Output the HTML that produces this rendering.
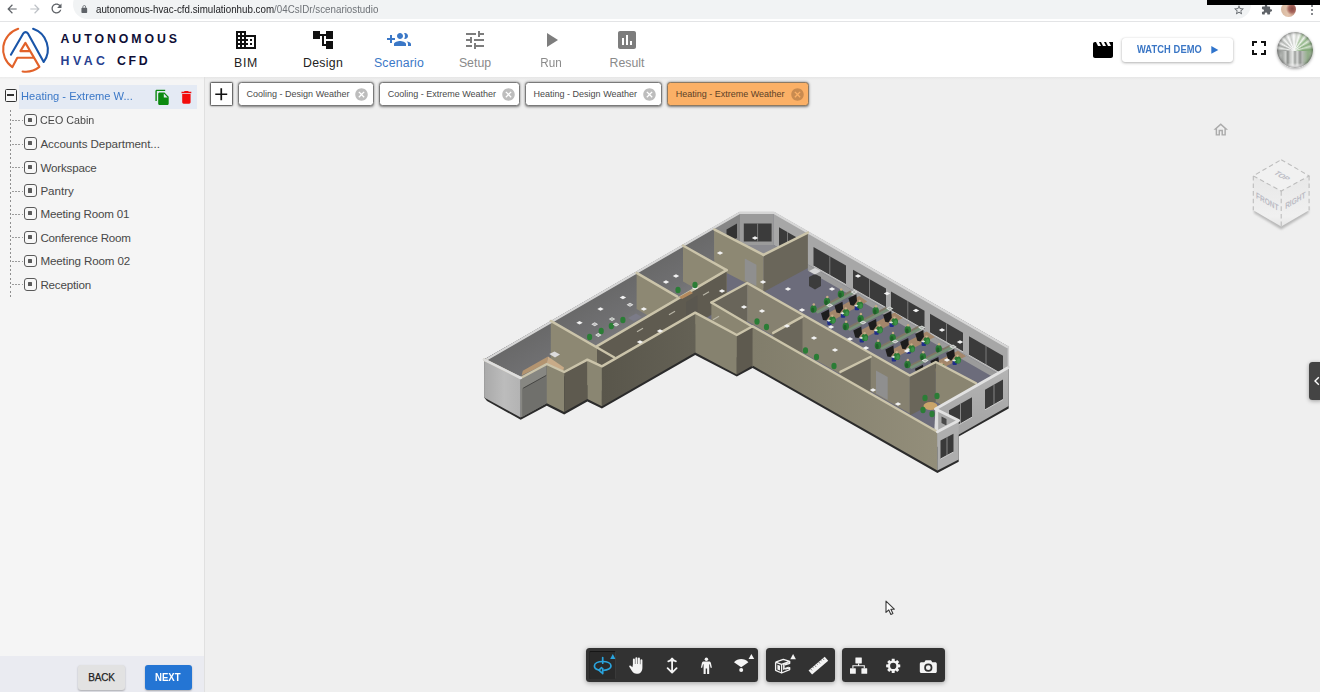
<!DOCTYPE html>
<html lang="en">
<head>
<meta charset="utf-8">
<title>Autonomous HVAC CFD - Scenario Studio</title>
<style>
*{box-sizing:border-box;margin:0;padding:0}
html,body{width:1320px;height:692px;overflow:hidden;background:#efefef;font-family:"Liberation Sans",sans-serif;color:#333}
.abs{position:absolute}
.t{position:absolute;white-space:nowrap;line-height:1}
#chrome{position:absolute;left:0;top:0;width:1320px;height:22px;background:#fff;border-bottom:1px solid #e3e4e6}
#urlpill{position:absolute;left:73px;top:-10px;width:1178px;height:29px;border-radius:14.5px;background:#f1f3f4}
#blackbar{position:absolute;left:1207px;top:0;width:113px;height:4.700px;background:#000;z-index:5}
#header{position:absolute;left:0;top:22px;width:1320px;height:55px;background:#fff}
#hshadow{position:absolute;left:0;top:77px;width:1320px;height:3px;background:linear-gradient(#e6e6e6,#efefef)}
#sidebar{position:absolute;left:0;top:77px;width:205px;height:615px;background:#f5f5f5;border-right:1px solid #e0e0e0}
#sbtop{position:absolute;left:0;top:77px;width:204px;height:3px;background:linear-gradient(#ebebeb,#f5f5f5)}
#sbbottom{position:absolute;left:0;top:655.500px;width:204px;height:36.500px;background:#eaebf1}
#rootrow{position:absolute;left:18.500px;top:84.700px;width:178.500px;height:24.600px;background:#e4eaf4}
#minus{position:absolute;left:4.700px;top:89.200px;width:12.700px;height:12.700px;border:1.600px solid #333;border-radius:1.500px;background:#f8f8f8}
#minus:after{content:"";position:absolute;left:1.700px;top:4px;width:6.200px;height:1.500px;background:#333}
#vdots{position:absolute;left:10px;top:110px;width:1px;height:188px;background:repeating-linear-gradient(180deg,#8f8f8f 0,#8f8f8f 2px,rgba(0,0,0,0) 2px,rgba(0,0,0,0) 4.300px)}
.hd{position:absolute;left:12px;width:11px;height:1px;background:repeating-linear-gradient(90deg,#9c9c9c 0,#9c9c9c 2px,rgba(0,0,0,0) 2px,rgba(0,0,0,0) 3.200px)}
.nd{position:absolute;left:24px;width:12.500px;height:12.500px;border:1.200px solid #5a5a5a;border-radius:3px;background:#f7f7f7}
.nd:after{content:"";position:absolute;left:3px;top:3px;width:4.200px;height:4.200px;background:#5a5a5a;border-radius:.5px}
.btn{position:absolute;top:665.300px;height:24.300px;border-radius:3px;box-shadow:0 1px 2px rgba(0,0,0,.28)}
.tab{position:absolute;top:82.200px;height:23.800px;border:1.600px solid #7a7a7a;border-radius:3.500px;background:#fff;box-shadow:0 .5px 2.500px rgba(0,0,0,.5)}
.tab.act{background:#fbb066;border-color:#8c7a64}
#plus{position:absolute;left:209.800px;top:82.400px;width:23.600px;height:23.500px;border:1.700px solid #6a6a6a;border-radius:1.500px;background:#fff;box-shadow:0 0 2px rgba(0,0,0,.55)}
.tbar{position:absolute;top:648px;height:34px;background:#323232;border-radius:3.500px;box-shadow:0 1px 5px rgba(0,0,0,.35)}
#demo{position:absolute;left:1122px;top:38px;width:111px;height:24px;border-radius:3px;background:#fff;box-shadow:0 1px 3px rgba(0,0,0,.3),0 0 1px rgba(0,0,0,.15)}
#avatar{position:absolute;left:1277px;top:32px;width:36px;height:36px;border-radius:50%;overflow:hidden;box-shadow:0 1px 3px rgba(0,0,0,.35);background:
 linear-gradient(180deg,rgba(255,255,255,0) 86%,rgba(255,255,255,.9) 96%),
 linear-gradient(90deg,rgba(150,152,150,0) 0,rgba(150,152,150,0) 10%,#a9aca9 16%,#cfd1cf 24%,#8a8d8a 30%,#c4c6c4 36%,#e6e8e6 44%,#9b9e9b 50%,#d9dbd9 56%,#8f928f 64%,#b9bcb9 70%,#a5b5a0 78%,#8fae86 86%,rgba(150,170,145,0) 94%) 0 100%/100% 46% no-repeat,
 radial-gradient(circle at 48% 50%,rgba(255,255,255,.9) 0,rgba(255,255,255,.35) 16%,rgba(255,255,255,0) 32%),
 conic-gradient(from -90deg at 48% 52%,#9a9d9a 0deg,#e8eae8 10deg,#a4a7a4 19deg,#f1f2f1 28deg,#b3b6b3 37deg,#f4f5f4 47deg,#c2c5c2 56deg,#fafafa 66deg,#c9ccc9 76deg,#ffffff 88deg,#d4d8d2 98deg,#f6f8f5 108deg,#a9c4a0 118deg,#eef3ec 127deg,#8fb585 137deg,#dfe9db 146deg,#86ad7c 156deg,#cfdfca 165deg,#7fa674 176deg,#9db894 190deg,#a0a39f 215deg,#b4b7b4 260deg,#a3a6a3 300deg,#b9bcb9 340deg,#9a9d9a 360deg)}
#avatar:after{content:"";position:absolute;inset:0;border-radius:50%;box-shadow:inset 0 0 2.5px 1px rgba(70,70,70,.6)}
#cavatar{position:absolute;left:1281px;top:2px;width:15px;height:15px;border-radius:50%;background:radial-gradient(circle at 75% 45%,#8a4a44 0,#a8665c 25%,rgba(0,0,0,0) 45%),linear-gradient(90deg,#d8b9a0,#e2c4ad 45%,#c79a86)}
#handle{position:absolute;left:1309px;top:361.500px;width:14px;height:38px;border-radius:3.500px;background:#444;box-shadow:0 1px 4px rgba(0,0,0,.35)}
</style>
</head>
<body>
<div id="chrome"><div id="urlpill"></div><div id="blackbar"></div>
<svg class="abs" style="left:4.8px;top:2px" width="14" height="14" viewBox="0 0 24 24" ><path fill="#5f6368" d="M20 11H7.830l5.590-5.590L12 4l-8 8 8 8 1.410-1.410L7.830 13H20v-2z"/></svg>
<svg class="abs" style="left:27.5px;top:2px" width="14" height="14" viewBox="0 0 24 24" ><path fill="#bdc1c6" d="M12 4l-1.410 1.410L16.170 11H4v2h12.170l-5.580 5.590L12 20l8-8z"/></svg>
<svg class="abs" style="left:48.8px;top:1.3px" width="15" height="15" viewBox="0 0 24 24" ><path fill="#5f6368" d="M17.650 6.350C16.200 4.900 14.210 4 12 4c-4.420 0-7.990 3.580-7.990 8s3.570 8 7.990 8c3.730 0 6.840-2.550 7.730-6h-2.080c-.82 2.330-3.040 4-5.650 4-3.310 0-6-2.690-6-6s2.690-6 6-6c1.660 0 3.140.69 4.220 1.780L13 11h7V4l-2.350 2.350z"/></svg>
<svg class="abs" style="left:80px;top:4.9px" width="8.6" height="8.6" viewBox="0 0 24 24" ><path fill="#5f6368" d="M18 8h-1V6c0-2.760-2.240-5-5-5S7 3.240 7 6v2H6c-1.100 0-2 .9-2 2v10c0 1.100.9 2 2 2h12c1.100 0 2-.9 2-2V10c0-1.100-.9-2-2-2zM9 6c0-1.660 1.340-3 3-3s3 1.340 3 3v2H9V6z"/></svg>
<svg class="abs" style="left:1233px;top:3.6px" width="12" height="12" viewBox="0 0 24 24" ><path fill="#5f6368" d="M22 9.240l-7.190-.62L12 2 9.190 8.630 2 9.240l5.460 4.730L5.820 21 12 17.270 18.180 21l-1.630-7.030L22 9.240zM12 15.400l-3.760 2.270 1-4.280-3.320-2.880 4.380-.38L12 6.100l1.710 4.040 4.380.38-3.320 2.880 1 4.280L12 15.400z"/></svg>
<svg class="abs" style="left:1261px;top:3.8px" width="11.5" height="11.5" viewBox="0 0 24 24" ><path fill="#5f6368" d="M20.500 11H19V7c0-1.100-.9-2-2-2h-4V3.500C13 2.120 11.880 1 10.500 1S8 2.120 8 3.500V5H4c-1.100 0-1.990.9-1.990 2v3.800H3.500c1.490 0 2.700 1.210 2.700 2.700s-1.210 2.700-2.700 2.700H2V20c0 1.100.9 2 2 2h3.800v-1.500c0-1.490 1.210-2.700 2.700-2.700 1.490 0 2.700 1.210 2.700 2.700V22H17c1.100 0 2-.9 2-2v-4h1.500c1.380 0 2.500-1.120 2.500-2.500S21.880 11 20.500 11z"/></svg>
<div id="cavatar"></div>
<div class="abs" style="left:1310.500px;top:4.500px;width:2px;height:2px;border-radius:50%;background:#5f6368;box-shadow:0 4px 0 #5f6368,0 8px 0 #5f6368"></div>
<div class="t" id="url" style="left:95.500px;top:3.5px;font-size:10.6px;color:#202124;transform:scaleX(.922);transform-origin:0 0">autonomous-hvac-cfd.simulationhub.com<span style="color:#6e7277">/04CsIDr/scenariostudio</span></div>
</div>
<div id="header"></div><div id="hshadow"></div>
<svg class="abs" style="left:0;top:22px" width="60" height="56" viewBox="0 22 60 56" fill="none" stroke-width="2.100" stroke-linecap="round" stroke-linejoin="round">
<path stroke="#e2622a" d="M18.200 28.800A21.700 21.700 0 0 0 12.300 67.200L17.300 57.700H33.400"/>
<path stroke="#e2622a" d="M20.400 51.100H29.100M20.400 51.100L25.400 42.900L39.400 66.900A21.700 21.700 0 0 1 22.600 71.500"/>
<path stroke="#1a55a8" d="M10.900 54.700L23.100 33.700Q25.600 30.600 28.100 33.700L43.700 62A21.700 21.700 0 0 0 33.100 28.800"/>
</svg>
<div class="t" id="lg1" style="left:60.500px;top:32.600px;font-weight:bold;font-size:12.300px;letter-spacing:2.950px;color:#0e0e36">AUTONOMOUS</div>
<div class="t" id="lg2" style="left:60.500px;top:54.900px;font-weight:bold;font-size:12.300px;letter-spacing:3.5px;color:#27408f">HVAC<span style="color:#0e0e36;letter-spacing:2.7px;margin-left:8.6px">CFD</span></div>
<svg class="abs" style="left:234px;top:28px" width="24" height="24" viewBox="0 0 24 24" ><path fill="#111" d="M12 7V3H2v18h20V7H12zM6 19H4v-2h2v2zm0-4H4v-2h2v2zm0-4H4V9h2v2zm0-4H4V5h2v2zm4 12H8v-2h2v2zm0-4H8v-2h2v2zm0-4H8V9h2v2zm0-4H8V5h2v2zm10 12h-8v-2h2v-2h-2v-2h2v-2h-2V9h8v10zm-2-8h-2v2h2v-2zm0 4h-2v2h2v-2z"/></svg>
<div class="t nav" id="nav0" style="left:206px;width:80px;text-align:center;top:56.800px;font-size:12.300px;color:#222;letter-spacing:.75px">BIM</div>
<svg class="abs" style="left:311px;top:28px" width="24" height="24" viewBox="0 0 24 24" ><path fill="#111" d="M22 11V3h-7v3H9V3H2v8h7V8h2v10h4v3h7v-8h-7v3h-2V8h2v3z"/></svg>
<div class="t nav" id="nav1" style="left:283px;width:80px;text-align:center;top:56.800px;font-size:12.300px;color:#222;letter-spacing:.3px">Design</div>
<svg class="abs" style="left:387px;top:28px" width="24" height="24" viewBox="0 0 24 24" ><path fill="#3b78c7" d="M8 10H5V7H3v3H0v2h3v3h2v-3h3v-2zm10 1c1.66 0 2.99-1.34 2.99-3S19.66 5 18 5c-.32 0-.63.05-.91.14.57.81.9 1.79.9 2.86s-.34 2.04-.9 2.86c.28.09.59.14.91.14zm-5 0c1.66 0 2.99-1.34 2.99-3S14.66 5 13 5c-1.66 0-3 1.34-3 3s1.34 3 3 3zm6.62 2.16c.83.73 1.38 1.66 1.38 2.84v2h3v-2c0-1.54-2.37-2.49-4.38-2.84zM13 13c-2 0-6 1-6 3v2h12v-2c0-2-4-3-6-3z"/></svg>
<div class="t nav" id="nav2" style="left:359px;width:80px;text-align:center;top:56.800px;font-size:12.300px;color:#3b78c7;letter-spacing:.2px">Scenario</div>
<svg class="abs" style="left:463px;top:28px" width="24" height="24" viewBox="0 0 24 24" ><path fill="#7d7d7d" d="M3 17v2h6v-2H3zM3 5v2h10V5H3zm10 16v-2h8v-2h-8v-2h-2v6h2zM7 9v2H3v2h4v2h2V9H7zm14 4v-2H11v2h10zm-6-4h2V7h4V5h-4V3h-2v6z"/></svg>
<div class="t nav" id="nav3" style="left:435px;width:80px;text-align:center;top:56.800px;font-size:12.300px;color:#8a8a8a">Setup</div>
<svg class="abs" style="left:539px;top:28px" width="24" height="24" viewBox="0 0 24 24" ><path fill="#7d7d7d" d="M8 5v14l11-7z"/></svg>
<div class="t nav" id="nav4" style="left:511px;width:80px;text-align:center;top:56.800px;font-size:12.300px;color:#8a8a8a;transform:scaleX(.95)">Run</div>
<svg class="abs" style="left:615px;top:28px" width="24" height="24" viewBox="0 0 24 24" ><path fill="#7d7d7d" d="M19 3H5c-1.1 0-2 .9-2 2v14c0 1.1.9 2 2 2h14c1.1 0 2-.9 2-2V5c0-1.1-.9-2-2-2zM9 17H7v-7h2v7zm4 0h-2V7h2v10zm4 0h-2v-4h2v4z"/></svg>
<div class="t nav" id="nav5" style="left:587px;width:80px;text-align:center;top:56.800px;font-size:12.300px;color:#8a8a8a">Result</div>
<svg class="abs" style="left:1091px;top:38px" width="24" height="24" viewBox="0 0 24 24" ><path fill="#000" d="M18 4l2 4h-3l-2-4h-2l2 4h-3l-2-4H8l2 4H7L5 4H4c-1.1 0-1.99.9-1.99 2L2 18c0 1.1.9 2 2 2h16c1.1 0 2-.9 2-2V4h-4z"/></svg>
<div id="demo"></div>
<div class="t" id="wd" style="left:1136.700px;top:45.200px;font-size:10.200px;font-weight:bold;letter-spacing:.1px;transform:scaleX(.915);transform-origin:0 0;color:#3a76c5">WATCH DEMO</div>
<svg class="abs" style="left:1211px;top:46px" width="8" height="8" viewBox="0 0 8 8"><path d="M.3 0L7.300 3.900L.3 7.800z" fill="#2f74cc"/></svg>
<svg class="abs" style="left:1246.5px;top:36px" width="24" height="24" viewBox="0 0 24 24" ><path fill="#111" d="M7 14H5v5h5v-2H7v-3zm-2-4h2V7h3V5H5v5zm12 7h-3v2h5v-5h-2v3zM14 5v2h3v3h2V5h-5z"/></svg>
<div id="avatar"></div>
<div id="sidebar"></div><div id="sbtop"></div><div id="sbbottom"></div><div id="rootrow"></div><div id="minus"></div><div id="vdots"></div>
<div class="t" id="root" style="left:20.600px;top:90.400px;font-size:11.600px;color:#3b78c7;transform:scaleX(.958);transform-origin:0 0">Heating - Extreme W...</div>
<svg class="abs" style="left:154.2px;top:88.5px" width="16.8" height="16.8" viewBox="0 0 24 24" ><path fill="#0c8a10" d="M16 1H4c-1.1 0-2 .9-2 2v14h2V3h12V1zm-1 4l6 6v10c0 1.1-.9 2-2 2H7.99C6.89 23 6 22.1 6 21l.01-14c0-1.1.89-2 1.99-2h7zm-1 7h5.5L14 6.500V12z"/></svg>
<svg class="abs" style="left:178px;top:88.7px" width="16.8" height="16.8" viewBox="0 0 24 24" ><path fill="#f20c0c" d="M6 19c0 1.1.9 2 2 2h8c1.1 0 2-.9 2-2V7H6v12zM19 4h-3.5l-1-1h-5l-1 1H5v2h14V4z"/></svg>
<div class="hd" style="top:120.0px"></div><div class="nd" style="top:113.7px"></div>
<div class="t ti" id="ti0" style="left:40.4px;top:114.2px;font-size:11.600px;color:#484848;transform:scaleX(.925);transform-origin:0 0">CEO Cabin</div>
<div class="hd" style="top:143.5px"></div><div class="nd" style="top:137.2px"></div>
<div class="t ti" id="ti1" style="left:40.4px;top:137.7px;font-size:11.600px;color:#484848;letter-spacing:-0.08px">Accounts Department...</div>
<div class="hd" style="top:167.3px"></div><div class="nd" style="top:161.0px"></div>
<div class="t ti" id="ti2" style="left:40.4px;top:161.5px;font-size:11.600px;color:#484848;letter-spacing:-0.18px">Workspace</div>
<div class="hd" style="top:190.7px"></div><div class="nd" style="top:184.4px"></div>
<div class="t ti" id="ti3" style="left:40.4px;top:184.9px;font-size:11.600px;color:#484848;letter-spacing:0px">Pantry</div>
<div class="hd" style="top:213.6px"></div><div class="nd" style="top:207.3px"></div>
<div class="t ti" id="ti4" style="left:40.4px;top:207.8px;font-size:11.600px;color:#484848;letter-spacing:-0.17px">Meeting Room 01</div>
<div class="hd" style="top:237.4px"></div><div class="nd" style="top:231.1px"></div>
<div class="t ti" id="ti5" style="left:40.4px;top:231.6px;font-size:11.600px;color:#484848;letter-spacing:-0.26px">Conference Room</div>
<div class="hd" style="top:260.9px"></div><div class="nd" style="top:254.6px"></div>
<div class="t ti" id="ti6" style="left:40.4px;top:255.1px;font-size:11.600px;color:#484848;letter-spacing:-0.12px">Meeting Room 02</div>
<div class="hd" style="top:284.4px"></div><div class="nd" style="top:278.1px"></div>
<div class="t ti" id="ti7" style="left:40.4px;top:278.6px;font-size:11.600px;color:#484848;letter-spacing:-0.17px">Reception</div>
<div class="btn" style="left:77.500px;width:47.500px;background:#e2e2e2"></div><div class="btn" style="left:144.500px;width:47.500px;background:#2475d4"></div>
<div class="t" id="bk" style="left:88.3px;top:672.700px;font-size:10px;letter-spacing:-.2px;-webkit-text-stroke:.250px #222;color:#222">BACK</div>
<div class="t" id="nx" style="left:154.900px;top:672.700px;font-size:10px;font-weight:bold;color:#fff;transform:scaleX(.955);transform-origin:0 0">NEXT</div>
<div id="plus"></div><svg class="abs" style="left:211.05px;top:83.75px" width="20.5" height="20.5" viewBox="0 0 24 24" ><path fill="#111" d="M19 13h-6v6h-2v-6H5v-2h6V5h2v6h6v2z"/></svg>
<div class="tab" style="left:238px;width:135.7px"></div>
<div class="t tb" id="tb0" style="left:246.6px;top:89.600px;font-size:9px;color:#4a4a4a">Cooling - Design Weather</div>
<svg class="abs" style="left:354.4px;top:86.8px" width="15" height="15" viewBox="0 0 24 24" ><path fill="#bdbdbd" d="M12 2C6.470 2 2 6.470 2 12s4.470 10 10 10 10-4.470 10-10S17.530 2 12 2zm5 13.590L15.590 17 12 13.410 8.410 17 7 15.590 10.590 12 7 8.410 8.410 7 12 10.590 15.590 7 17 8.410 13.410 12 17 15.590z"/></svg>
<div class="tab" style="left:378.7px;width:141.3px"></div>
<div class="t tb" id="tb1" style="left:387.7px;top:89.600px;font-size:9px;color:#4a4a4a">Cooling - Extreme Weather</div>
<svg class="abs" style="left:500.7px;top:86.8px" width="15" height="15" viewBox="0 0 24 24" ><path fill="#bdbdbd" d="M12 2C6.470 2 2 6.470 2 12s4.470 10 10 10 10-4.470 10-10S17.530 2 12 2zm5 13.590L15.590 17 12 13.410 8.410 17 7 15.590 10.590 12 7 8.410 8.410 7 12 10.590 15.590 7 17 8.410 13.410 12 17 15.590z"/></svg>
<div class="tab" style="left:524.7px;width:137px"></div>
<div class="t tb" id="tb2" style="left:533.6px;top:89.600px;font-size:9px;color:#4a4a4a">Heating - Design Weather</div>
<svg class="abs" style="left:642.4000000000001px;top:86.8px" width="15" height="15" viewBox="0 0 24 24" ><path fill="#bdbdbd" d="M12 2C6.470 2 2 6.470 2 12s4.470 10 10 10 10-4.470 10-10S17.530 2 12 2zm5 13.590L15.590 17 12 13.410 8.410 17 7 15.590 10.590 12 7 8.410 8.410 7 12 10.590 15.590 7 17 8.410 13.410 12 17 15.590z"/></svg>
<div class="tab act" style="left:666.7px;width:142.5px"></div>
<div class="t tb" id="tb3" style="left:675.7px;top:89.600px;font-size:9px;color:#5b4126">Heating - Extreme Weather</div>
<svg class="abs" style="left:789.9000000000001px;top:86.8px" width="15" height="15" viewBox="0 0 24 24" ><path fill="#c98b50" d="M12 2C6.470 2 2 6.470 2 12s4.470 10 10 10 10-4.470 10-10S17.530 2 12 2zm5 13.590L15.590 17 12 13.410 8.410 17 7 15.590 10.590 12 7 8.410 8.410 7 12 10.590 15.590 7 17 8.410 13.410 12 17 15.590z"/></svg>
<!--BLD--><svg class="abs" style="left:470px;top:200px;filter:blur(.45px)" width="560" height="290" viewBox="470 200 560 290"><polygon points="484.1,359.6 739.8,211.9 773.8,211.9 1007.8,346.2 1008.7,367.0 1008.7,408.4 958.7,436.4 958.7,461.8 937.4,472.9 752.6,367.9 736.8,376.6 695.2,354.9 601.9,408.6 587.4,401.5 564.2,414.6 546.8,405.8 520.7,419.8 487.0,401.0 484.1,397.5" fill="#2b2b2b" />
<polygon points="484.1,359.6 739.8,211.9 773.8,211.9 1007.8,346.2 1008.7,367.3 935.4,409.0 937.4,431.8 752.6,326.2 736.8,335.0 695.2,312.6 601.9,366.4 587.4,359.6 564.2,372.0 546.8,364.0 520.7,378.0" fill="#6c6c7b" />
<defs><linearGradient id="lw" gradientUnits="userSpaceOnUse" x1="600" y1="290" x2="630" y2="342"><stop offset="0" stop-color="#686868"/><stop offset="0.55" stop-color="#707072"/><stop offset="1" stop-color="#808084"/></linearGradient><linearGradient id="lg" x1="0" y1="0" x2="1" y2="0"><stop offset="0" stop-color="#a9a9a9"/><stop offset="0.55" stop-color="#bcbcbc"/><stop offset="1" stop-color="#b3b3b3"/></linearGradient><linearGradient id="km" gradientUnits="userSpaceOnUse" x1="602" y1="0" x2="695" y2="0"><stop offset="0" stop-color="#59564b"/><stop offset="1" stop-color="#646155"/></linearGradient><linearGradient id="fw" gradientUnits="userSpaceOnUse" x1="752" y1="0" x2="937" y2="0"><stop offset="0" stop-color="#817d6b"/><stop offset="1" stop-color="#938e7a"/></linearGradient><linearGradient id="seg" x1="0" y1="0" x2="0" y2="1"><stop offset="0" stop-color="#b4b4b4"/><stop offset="1" stop-color="#a0a0a0"/></linearGradient></defs>
<polygon points="484.1,359.6 739.8,211.9 763.5,254.9 726.6,270.1 597.0,346.1 614.4,357.5 601.9,366.4 587.4,359.6 564.2,372.0 546.8,364.0 520.7,378.0" fill="url(#lw)" />
<polygon points="714.2,228.5 739.8,211.9 739.8,244.9 714.2,259.5" fill="#868686" />
<polygon points="739.8,211.9 773.8,211.9 773.8,244.9 739.8,244.9" fill="#9b9b9b" />
<polygon points="773.8,211.9 1007.8,346.2 1007.8,379.2 773.8,244.9" fill="#a7a7a7" />
<polygon points="714.2,262.0 739.8,245.0 773.8,245.0 807.9,264.5 763.5,288.0" fill="#8b8b90" />
<polygon points="779.0,227.2 796.0,236.9 796.0,255.9 779.0,246.2" fill="#3b3b3b" />
<line x1="787.5" y1="232.1" x2="787.5" y2="251.1" stroke="#8a8a8a" stroke-width="0.8" />
<line x1="779.0" y1="246.2" x2="796.0" y2="255.9" stroke="#cfcfcf" stroke-width="0.9" />
<polygon points="813.5,247.0 846.0,265.6 846.0,284.6 813.5,266.0" fill="#3b3b3b" />
<line x1="829.8" y1="256.3" x2="829.8" y2="275.3" stroke="#8a8a8a" stroke-width="0.8" />
<line x1="813.5" y1="266.0" x2="846.0" y2="284.6" stroke="#cfcfcf" stroke-width="0.9" />
<polygon points="853.0,269.7 886.0,288.6 886.0,307.6 853.0,288.7" fill="#3b3b3b" />
<line x1="869.5" y1="279.1" x2="869.5" y2="298.1" stroke="#8a8a8a" stroke-width="0.8" />
<line x1="853.0" y1="288.7" x2="886.0" y2="307.6" stroke="#cfcfcf" stroke-width="0.9" />
<polygon points="891.0,291.5 924.5,310.7 924.5,329.7 891.0,310.5" fill="#3b3b3b" />
<line x1="907.8" y1="301.1" x2="907.8" y2="320.1" stroke="#8a8a8a" stroke-width="0.8" />
<line x1="891.0" y1="310.5" x2="924.5" y2="329.7" stroke="#cfcfcf" stroke-width="0.9" />
<polygon points="930.0,313.8 963.0,332.8 963.0,351.8 930.0,332.8" fill="#3b3b3b" />
<line x1="946.5" y1="323.3" x2="946.5" y2="342.3" stroke="#8a8a8a" stroke-width="0.8" />
<line x1="930.0" y1="332.8" x2="963.0" y2="351.8" stroke="#cfcfcf" stroke-width="0.9" />
<polygon points="969.0,336.2 1003.0,355.7 1003.0,374.7 969.0,355.2" fill="#3b3b3b" />
<line x1="986.0" y1="346.0" x2="986.0" y2="365.0" stroke="#8a8a8a" stroke-width="0.8" />
<line x1="969.0" y1="355.2" x2="1003.0" y2="374.7" stroke="#cfcfcf" stroke-width="0.9" />
<polygon points="743.8,223.5 771.6,223.5 771.6,241.5 743.8,241.5" fill="#3b3b3b" />
<line x1="757.6" y1="223.5" x2="757.6" y2="241.5" stroke="#8a8a8a" stroke-width="0.8" />
<polygon points="726.5,229.5 737.0,223.5 737.0,238.0 726.5,243.0" fill="#333" />
<polygon points="714.2,229.4 763.5,254.9 763.5,291.9 714.2,266.4" fill="#8d8873" />
<polygon points="744.8,258.5 756.4,264.8 756.4,286.0 744.8,280.5" fill="#8f8f8f" />
<polygon points="763.5,254.9 807.9,232.6 807.9,273.6 763.5,295.9" fill="#6a665a" />
<polygon points="683.0,245.5 726.6,270.1 726.6,306.1 683.0,281.5" fill="#8d8873" />
<polygon points="636.6,272.9 677.3,296.6 677.3,332.6 636.6,308.9" fill="#8d8873" />
<polygon points="550.8,320.9 614.4,357.5 614.4,395.5 550.8,370.9" fill="#8d8873" />
<polygon points="597.0,346.1 726.6,270.1 726.6,306.1 597.0,382.1" fill="#5f5b50" />
<polygon points="686.0,302.0 697.5,295.3 697.5,315.0 686.0,321.5" fill="#5a574f" />
<polygon points="763.5,292.0 807.9,268.0 1007.8,383.0 1008.0,367.3 976.1,383.3 935.8,362.0 909.8,375.5 747.2,283.0" fill="#6c6c7b" />
<polygon points="807.9,264.5 1007.8,379.2 1007.8,385.5 807.9,270.8" fill="#9b9b9b" />
<polygon points="822.0,316.4 859.2,296.1 867.2,301.6 830.0,321.9" fill="#a3866a" />
<polygon points="813.7,310.5 850.2,290.6 854.2,293.1 817.7,313.0" fill="#7f7766" />
<ellipse cx="813.5" cy="309.0" rx="3.2" ry="3.8" fill="#2a7a35"/>
<ellipse cx="812.7" cy="310.0" rx="1.6" ry="2.6" fill="#1f5f29"/>
<circle cx="813.8" cy="304.4" r="1.25" fill="#c5ac86"/>
<ellipse cx="827.0" cy="301.6" rx="3.2" ry="3.8" fill="#2a7a35"/>
<ellipse cx="826.2" cy="302.6" rx="1.6" ry="2.6" fill="#1f5f29"/>
<circle cx="827.3" cy="297.0" r="1.25" fill="#c5ac86"/>
<ellipse cx="840.9" cy="294.1" rx="3.2" ry="3.8" fill="#2a7a35"/>
<ellipse cx="840.1" cy="295.1" rx="1.6" ry="2.6" fill="#1f5f29"/>
<circle cx="841.2" cy="289.5" r="1.25" fill="#c5ac86"/>
<polygon points="821.0,313.2 829.0,309.2 829.6,315.9 826.2,320.6 823.0,320.0" fill="#1d1d1d" />
<polygon points="834.5,305.8 842.5,301.8 843.1,308.5 839.7,313.2 836.5,312.6" fill="#1d1d1d" />
<polygon points="848.4,298.3 856.4,294.3 857.0,301.0 853.6,305.7 850.4,305.1" fill="#1d1d1d" />
<polyline points="817.7,312.0 854.2,292.1" fill="none" stroke="#78907a" stroke-width="2.7" stroke-linejoin="round" stroke-linecap="round" />
<polygon points="826.1,305.4 829.7,303.3 833.3,305.4 829.7,307.5" fill="#d9dcd9" />
<polygon points="827.9,305.4 829.7,304.3 831.5,305.4 829.7,306.5" fill="#a9ada9" />
<polygon points="850.6,292.1 854.2,290.0 857.8,292.1 854.2,294.2" fill="#d9dcd9" />
<polygon points="852.4,292.1 854.2,291.0 856.0,292.1 854.2,293.2" fill="#a9ada9" />
<rect x="827.3" y="320.5" width="4.4" height="4.6" rx="1" fill="#1f2d8a"/>
<ellipse cx="832.5" cy="320.0" rx="3.3" ry="3.7" fill="#2a7a35"/>
<ellipse cx="833.5" cy="320.8" rx="1.7" ry="2.5" fill="#3c9247"/>
<circle cx="832.3" cy="315.8" r="1.2" fill="#c5ac86"/>
<polygon points="826.8,320.6 828.9,319.5 831.0,320.6 828.9,321.8" fill="#e3ebe3" />
<rect x="840.8" y="313.1" width="4.4" height="4.6" rx="1" fill="#1f2d8a"/>
<ellipse cx="846.0" cy="312.6" rx="3.3" ry="3.7" fill="#2a7a35"/>
<ellipse cx="847.0" cy="313.4" rx="1.7" ry="2.5" fill="#3c9247"/>
<circle cx="845.8" cy="308.4" r="1.2" fill="#c5ac86"/>
<polygon points="840.3,313.2 842.4,312.1 844.5,313.2 842.4,314.4" fill="#e3ebe3" />
<rect x="854.7" y="305.6" width="4.4" height="4.6" rx="1" fill="#1f2d8a"/>
<ellipse cx="859.9" cy="305.1" rx="3.3" ry="3.7" fill="#2a7a35"/>
<ellipse cx="860.9" cy="305.9" rx="1.7" ry="2.5" fill="#3c9247"/>
<circle cx="859.7" cy="300.9" r="1.2" fill="#c5ac86"/>
<polygon points="854.2,305.7 856.3,304.5 858.4,305.7 856.3,306.8" fill="#e3ebe3" />
<polygon points="854.0,333.8 894.7,312.6 902.7,318.1 862.0,339.3" fill="#a3866a" />
<polygon points="845.8,327.9 885.7,307.1 889.7,309.6 849.8,330.4" fill="#7f7766" />
<ellipse cx="845.8" cy="326.4" rx="3.2" ry="3.8" fill="#2a7a35"/>
<ellipse cx="845.0" cy="327.4" rx="1.6" ry="2.6" fill="#1f5f29"/>
<circle cx="846.1" cy="321.8" r="1.25" fill="#c5ac86"/>
<ellipse cx="860.6" cy="318.7" rx="3.2" ry="3.8" fill="#2a7a35"/>
<ellipse cx="859.8" cy="319.7" rx="1.6" ry="2.6" fill="#1f5f29"/>
<circle cx="860.9" cy="314.1" r="1.25" fill="#c5ac86"/>
<ellipse cx="875.7" cy="310.8" rx="3.2" ry="3.8" fill="#2a7a35"/>
<ellipse cx="874.9" cy="311.8" rx="1.6" ry="2.6" fill="#1f5f29"/>
<circle cx="876.0" cy="306.2" r="1.25" fill="#c5ac86"/>
<polygon points="853.3,330.6 861.3,326.6 861.9,333.3 858.5,338.0 855.3,337.4" fill="#1d1d1d" />
<polygon points="868.1,322.9 876.1,318.9 876.7,325.6 873.3,330.3 870.1,329.7" fill="#1d1d1d" />
<polygon points="883.2,315.0 891.2,311.0 891.8,317.7 888.4,322.4 885.2,321.8" fill="#1d1d1d" />
<polyline points="849.8,329.4 889.7,308.6" fill="none" stroke="#78907a" stroke-width="2.7" stroke-linejoin="round" stroke-linecap="round" />
<polygon points="859.4,322.5 863.0,320.4 866.6,322.5 863.0,324.6" fill="#d9dcd9" />
<polygon points="861.2,322.5 863.0,321.4 864.8,322.5 863.0,323.6" fill="#a9ada9" />
<polygon points="886.1,308.6 889.7,306.5 893.3,308.6 889.7,310.7" fill="#d9dcd9" />
<polygon points="887.9,308.6 889.7,307.5 891.5,308.6 889.7,309.7" fill="#a9ada9" />
<rect x="859.6" y="337.9" width="4.4" height="4.6" rx="1" fill="#1f2d8a"/>
<ellipse cx="864.8" cy="337.4" rx="3.3" ry="3.7" fill="#2a7a35"/>
<ellipse cx="865.8" cy="338.2" rx="1.7" ry="2.5" fill="#3c9247"/>
<circle cx="864.6" cy="333.2" r="1.2" fill="#c5ac86"/>
<polygon points="859.1,338.0 861.2,336.8 863.3,338.0 861.2,339.1" fill="#e3ebe3" />
<rect x="874.4" y="330.2" width="4.4" height="4.6" rx="1" fill="#1f2d8a"/>
<ellipse cx="879.6" cy="329.7" rx="3.3" ry="3.7" fill="#2a7a35"/>
<ellipse cx="880.6" cy="330.5" rx="1.7" ry="2.5" fill="#3c9247"/>
<circle cx="879.4" cy="325.5" r="1.2" fill="#c5ac86"/>
<polygon points="873.9,330.3 876.0,329.1 878.1,330.3 876.0,331.4" fill="#e3ebe3" />
<rect x="889.5" y="322.3" width="4.4" height="4.6" rx="1" fill="#1f2d8a"/>
<ellipse cx="894.7" cy="321.8" rx="3.3" ry="3.7" fill="#2a7a35"/>
<ellipse cx="895.7" cy="322.6" rx="1.7" ry="2.5" fill="#3c9247"/>
<circle cx="894.5" cy="317.6" r="1.2" fill="#c5ac86"/>
<polygon points="889.0,322.4 891.1,321.2 893.2,322.4 891.1,323.5" fill="#e3ebe3" />
<polygon points="886.1,352.8 926.8,331.6 934.8,337.1 894.1,358.3" fill="#a3866a" />
<polygon points="877.9,346.9 917.8,326.1 921.8,328.6 881.9,349.4" fill="#7f7766" />
<ellipse cx="877.9" cy="345.4" rx="3.2" ry="3.8" fill="#2a7a35"/>
<ellipse cx="877.1" cy="346.4" rx="1.6" ry="2.6" fill="#1f5f29"/>
<circle cx="878.2" cy="340.8" r="1.25" fill="#c5ac86"/>
<ellipse cx="892.7" cy="337.7" rx="3.2" ry="3.8" fill="#2a7a35"/>
<ellipse cx="891.9" cy="338.7" rx="1.6" ry="2.6" fill="#1f5f29"/>
<circle cx="893.0" cy="333.1" r="1.25" fill="#c5ac86"/>
<ellipse cx="907.8" cy="329.8" rx="3.2" ry="3.8" fill="#2a7a35"/>
<ellipse cx="907.0" cy="330.8" rx="1.6" ry="2.6" fill="#1f5f29"/>
<circle cx="908.1" cy="325.2" r="1.25" fill="#c5ac86"/>
<polygon points="885.4,349.6 893.4,345.6 894.0,352.3 890.6,357.0 887.4,356.4" fill="#1d1d1d" />
<polygon points="900.2,341.9 908.2,337.9 908.8,344.6 905.4,349.3 902.2,348.7" fill="#1d1d1d" />
<polygon points="915.3,334.0 923.3,330.0 923.9,336.7 920.5,341.4 917.3,340.8" fill="#1d1d1d" />
<polyline points="881.9,348.4 921.8,327.6" fill="none" stroke="#78907a" stroke-width="2.7" stroke-linejoin="round" stroke-linecap="round" />
<polygon points="891.5,341.5 895.1,339.4 898.7,341.5 895.1,343.6" fill="#d9dcd9" />
<polygon points="893.3,341.5 895.1,340.4 896.9,341.5 895.1,342.6" fill="#a9ada9" />
<polygon points="918.2,327.6 921.8,325.5 925.4,327.6 921.8,329.7" fill="#d9dcd9" />
<polygon points="920.0,327.6 921.8,326.5 923.6,327.6 921.8,328.7" fill="#a9ada9" />
<rect x="891.7" y="356.9" width="4.4" height="4.6" rx="1" fill="#1f2d8a"/>
<ellipse cx="896.9" cy="356.4" rx="3.3" ry="3.7" fill="#2a7a35"/>
<ellipse cx="897.9" cy="357.2" rx="1.7" ry="2.5" fill="#3c9247"/>
<circle cx="896.7" cy="352.2" r="1.2" fill="#c5ac86"/>
<polygon points="891.2,357.0 893.3,355.8 895.4,357.0 893.3,358.1" fill="#e3ebe3" />
<rect x="906.5" y="349.2" width="4.4" height="4.6" rx="1" fill="#1f2d8a"/>
<ellipse cx="911.7" cy="348.7" rx="3.3" ry="3.7" fill="#2a7a35"/>
<ellipse cx="912.7" cy="349.5" rx="1.7" ry="2.5" fill="#3c9247"/>
<circle cx="911.5" cy="344.5" r="1.2" fill="#c5ac86"/>
<polygon points="906.0,349.3 908.1,348.1 910.2,349.3 908.1,350.4" fill="#e3ebe3" />
<rect x="921.6" y="341.3" width="4.4" height="4.6" rx="1" fill="#1f2d8a"/>
<ellipse cx="926.8" cy="340.8" rx="3.3" ry="3.7" fill="#2a7a35"/>
<ellipse cx="927.8" cy="341.6" rx="1.7" ry="2.5" fill="#3c9247"/>
<circle cx="926.6" cy="336.6" r="1.2" fill="#c5ac86"/>
<polygon points="921.1,341.4 923.2,340.2 925.3,341.4 923.2,342.5" fill="#e3ebe3" />
<polygon points="915.6,371.9 958.0,350.7 966.0,356.2 923.6,377.4" fill="#a3866a" />
<polygon points="907.4,366.0 949.0,345.2 953.0,347.7 911.4,368.5" fill="#7f7766" />
<ellipse cx="907.5" cy="364.5" rx="3.2" ry="3.8" fill="#2a7a35"/>
<ellipse cx="906.7" cy="365.5" rx="1.6" ry="2.6" fill="#1f5f29"/>
<circle cx="907.8" cy="359.9" r="1.25" fill="#c5ac86"/>
<ellipse cx="922.9" cy="356.8" rx="3.2" ry="3.8" fill="#2a7a35"/>
<ellipse cx="922.1" cy="357.8" rx="1.6" ry="2.6" fill="#1f5f29"/>
<circle cx="923.2" cy="352.2" r="1.25" fill="#c5ac86"/>
<ellipse cx="938.7" cy="348.9" rx="3.2" ry="3.8" fill="#2a7a35"/>
<ellipse cx="937.9" cy="349.9" rx="1.6" ry="2.6" fill="#1f5f29"/>
<circle cx="939.0" cy="344.3" r="1.25" fill="#c5ac86"/>
<polygon points="915.0,368.7 923.0,364.7 923.6,371.4 920.2,376.1 917.0,375.5" fill="#1d1d1d" />
<polygon points="930.4,361.0 938.4,357.0 939.0,363.7 935.6,368.4 932.4,367.8" fill="#1d1d1d" />
<polygon points="946.2,353.1 954.2,349.1 954.8,355.8 951.4,360.5 948.2,359.9" fill="#1d1d1d" />
<polyline points="911.4,367.5 953.0,346.7" fill="none" stroke="#78907a" stroke-width="2.7" stroke-linejoin="round" stroke-linecap="round" />
<polygon points="921.5,360.6 925.1,358.5 928.7,360.6 925.1,362.7" fill="#d9dcd9" />
<polygon points="923.3,360.6 925.1,359.5 926.9,360.6 925.1,361.7" fill="#a9ada9" />
<polygon points="949.4,346.7 953.0,344.6 956.6,346.7 953.0,348.8" fill="#d9dcd9" />
<polygon points="951.2,346.7 953.0,345.6 954.8,346.7 953.0,347.8" fill="#a9ada9" />
<rect x="921.3" y="376.0" width="4.4" height="4.6" rx="1" fill="#1f2d8a"/>
<ellipse cx="926.5" cy="375.5" rx="3.3" ry="3.7" fill="#2a7a35"/>
<ellipse cx="927.5" cy="376.3" rx="1.7" ry="2.5" fill="#3c9247"/>
<circle cx="926.3" cy="371.3" r="1.2" fill="#c5ac86"/>
<polygon points="920.8,376.1 922.9,374.9 925.0,376.1 922.9,377.2" fill="#e3ebe3" />
<rect x="936.7" y="368.3" width="4.4" height="4.6" rx="1" fill="#1f2d8a"/>
<ellipse cx="941.9" cy="367.8" rx="3.3" ry="3.7" fill="#2a7a35"/>
<ellipse cx="942.9" cy="368.6" rx="1.7" ry="2.5" fill="#3c9247"/>
<circle cx="941.7" cy="363.6" r="1.2" fill="#c5ac86"/>
<polygon points="936.2,368.4 938.3,367.2 940.4,368.4 938.3,369.5" fill="#e3ebe3" />
<rect x="952.5" y="360.4" width="4.4" height="4.6" rx="1" fill="#1f2d8a"/>
<ellipse cx="957.7" cy="359.9" rx="3.3" ry="3.7" fill="#2a7a35"/>
<ellipse cx="958.7" cy="360.7" rx="1.7" ry="2.5" fill="#3c9247"/>
<circle cx="957.5" cy="355.7" r="1.2" fill="#c5ac86"/>
<polygon points="952.0,360.5 954.1,359.3 956.2,360.5 954.1,361.6" fill="#e3ebe3" />
<polygon points="712.5,302.5 747.2,283.0 747.2,321.0 712.5,340.5" fill="#69655a" />
<polygon points="747.2,283.0 909.8,375.5 909.8,413.5 747.2,321.0" fill="#868170" />
<polygon points="773.2,332.9 802.5,316.6 802.5,354.6 773.2,370.9" fill="#6b675b" />
<polygon points="840.4,371.9 870.7,356.7 870.7,394.7 840.4,409.9" fill="#6b675b" />
<polygon points="876.0,370.5 887.7,377.0 887.7,400.0 876.0,393.5" fill="#8f8f8f" />
<polygon points="909.8,375.5 935.8,362.0 935.8,402.0 909.8,415.5" fill="#6a665a" />
<polygon points="935.8,362.0 976.1,383.3 976.1,423.3 935.8,402.0" fill="#8a8571" />
<polygon points="913.0,415.0 935.8,402.0 960.0,415.0 937.0,428.0" fill="#6c6c7b" />
<ellipse cx="930.5" cy="406" rx="7" ry="4" fill="#c9a46a"/>
<polygon points="711.4,302.5 752.6,326.8 752.6,366.8 711.4,342.5" fill="#8a8571" />
<polygon points="484.1,359.6 520.7,378.0 520.7,417.6 484.1,397.6" fill="url(#lg)" />
<polygon points="520.7,378.0 546.8,364.0 546.8,403.2 520.7,417.6" fill="#878782" />
<polygon points="522.2,388.6 546.3,375.4 546.3,403.4 522.2,417.0" fill="#70706c" />
<line x1="523.2" y1="388.2" x2="546.3" y2="375.4" stroke="#3f3f3d" stroke-width="0.9" />
<polygon points="546.8,364.0 564.2,372.0 564.2,412.0 546.8,403.2" fill="#8a8672" />
<polygon points="564.2,372.0 587.4,359.6 587.4,399.0 564.2,412.0" fill="#5e5a4f" />
<polygon points="587.4,359.6 601.9,366.4 601.9,406.2 587.4,399.0" fill="#8a8672" />
<polygon points="601.9,366.4 695.2,312.6 695.2,352.5 601.9,406.2" fill="url(#km)" />
<polygon points="695.2,312.6 736.8,335.0 736.8,374.4 695.2,352.5" fill="#86826f" />
<polygon points="736.8,335.0 752.6,326.2 752.6,365.6 736.8,374.4" fill="#5e5a4f" />
<polygon points="935.4,409.0 1008.7,367.3 1008.7,406.1 935.4,448.0" fill="url(#seg)" />
<polygon points="985.0,389.8 1003.0,379.5 1003.0,399.5 985.0,409.8" fill="#3a3a3a" />
<line x1="994.0" y1="384.7" x2="994.0" y2="404.7" stroke="#9a9a9a" stroke-width="0.8" />
<line x1="985.0" y1="409.8" x2="1003.0" y2="399.5" stroke="#d5d5d5" stroke-width="0.9" />
<polygon points="949.0,410.3 972.0,397.2 972.0,417.2 949.0,430.3" fill="#3a3a3a" />
<line x1="960.5" y1="403.7" x2="960.5" y2="423.7" stroke="#9a9a9a" stroke-width="0.8" />
<line x1="949.0" y1="430.3" x2="972.0" y2="417.2" stroke="#d5d5d5" stroke-width="0.9" />
<polygon points="752.6,326.2 937.4,431.8 937.4,470.6 752.6,365.6" fill="url(#fw)" />
<polygon points="935.4,409.0 958.7,420.6 937.4,431.8 934.5,430.0" fill="#a9a9a9" />
<polygon points="941.5,416.5 946.5,419.0 946.5,425.5 941.5,423.0" fill="#4a4a4a" />
<polygon points="935.4,409.0 938.2,410.3 938.2,432.0 934.5,430.0" fill="#dcdcdc" />
<polygon points="937.4,431.8 958.7,420.6 958.7,459.4 937.4,470.6" fill="#aeaeae" />
<polygon points="940.5,440.5 953.5,433.8 953.5,452.0 940.5,459.0" fill="#3a3a3a" />
<line x1="947.0" y1="437.2" x2="947.0" y2="455.5" stroke="#9a9a9a" stroke-width="0.8" />
<line x1="940.5" y1="459.0" x2="953.5" y2="452.0" stroke="#d5d5d5" stroke-width="0.9" />
<polygon points="521.6,375.6 546.8,363.3 548.0,356.6 522.8,370.7" fill="#b39470" />
<polygon points="548.0,356.6 564.0,367.6 563.0,371.5 546.8,363.3" fill="#c8ab88" />
<polygon points="549.3,354.0 554.5,351.5 560.0,354.4 555.0,357.4" fill="#dcdcdc" />
<polyline points="485.1,360.2 739.8,212.7 773.8,212.7 1007.3,347.0" fill="none" stroke="#d6d6d6" stroke-width="2.4" stroke-linejoin="round" stroke-linecap="round" />
<polyline points="484.1,359.6 520.7,378.0 546.8,364.0 564.2,372.0 587.4,359.6 601.9,366.4 695.2,312.6 736.8,335.0 752.6,326.2 937.4,431.8" fill="none" stroke="#cbc4aa" stroke-width="2.4" stroke-linejoin="round" stroke-linecap="round" />
<polyline points="484.1,359.6 520.7,378.0" fill="none" stroke="#dedede" stroke-width="2.6" stroke-linejoin="round" stroke-linecap="round" />
<polyline points="714.2,229.4 763.5,254.9" fill="none" stroke="#cbc4aa" stroke-width="2.4" stroke-linejoin="round" stroke-linecap="round" />
<polyline points="683.0,245.5 726.6,270.1" fill="none" stroke="#cbc4aa" stroke-width="2.4" stroke-linejoin="round" stroke-linecap="round" />
<polyline points="636.6,272.9 677.3,296.6" fill="none" stroke="#cbc4aa" stroke-width="2.4" stroke-linejoin="round" stroke-linecap="round" />
<polyline points="550.8,320.9 614.4,357.5" fill="none" stroke="#cbc4aa" stroke-width="2.4" stroke-linejoin="round" stroke-linecap="round" />
<polyline points="763.5,254.9 807.9,232.6" fill="none" stroke="#cbc4aa" stroke-width="2.4" stroke-linejoin="round" stroke-linecap="round" />
<polyline points="597.0,346.1 726.6,270.1" fill="none" stroke="#cbc4aa" stroke-width="2.4" stroke-linejoin="round" stroke-linecap="round" />
<polyline points="711.4,302.5 747.2,283.0 909.8,375.5 935.8,362.0 976.1,383.3" fill="none" stroke="#cbc4aa" stroke-width="2.4" stroke-linejoin="round" stroke-linecap="round" />
<polyline points="711.4,302.5 752.6,326.8" fill="none" stroke="#cbc4aa" stroke-width="2.4" stroke-linejoin="round" stroke-linecap="round" />
<polyline points="773.2,332.9 802.5,316.6" fill="none" stroke="#cbc4aa" stroke-width="2.4" stroke-linejoin="round" stroke-linecap="round" />
<polyline points="840.4,371.9 870.7,356.7" fill="none" stroke="#cbc4aa" stroke-width="2.4" stroke-linejoin="round" stroke-linecap="round" />
<polyline points="937.4,431.8 958.7,420.6 935.4,409.0 1008.7,367.3" fill="none" stroke="#e2e2e2" stroke-width="2.8" stroke-linejoin="round" stroke-linecap="round" />
<polyline points="1008.3,346.5 1008.3,367.0" fill="none" stroke="#cfcfcf" stroke-width="1.6" stroke-linejoin="round" stroke-linecap="round" />
<polygon points="576.3,322.7 579.5,320.9 582.7,322.7 579.5,324.5" fill="#f2f2f2" />
<polygon points="597.3,309.0 600.5,307.2 603.7,309.0 600.5,310.8" fill="#f2f2f2" />
<polygon points="619.7,297.5 622.9,295.7 626.1,297.5 622.9,299.3" fill="#f2f2f2" />
<polygon points="640.6,309.0 643.8,307.2 647.0,309.0 643.8,310.8" fill="#f2f2f2" />
<polygon points="672.8,276.0 676.0,274.2 679.2,276.0 676.0,277.8" fill="#f2f2f2" />
<polygon points="662.8,282.0 666.0,280.2 669.2,282.0 666.0,283.8" fill="#f2f2f2" />
<polygon points="691.8,288.0 695.0,286.2 698.2,288.0 695.0,289.8" fill="#f2f2f2" />
<polygon points="716.8,253.0 720.0,251.2 723.2,253.0 720.0,254.8" fill="#f2f2f2" />
<polygon points="718.8,291.0 722.0,289.2 725.2,291.0 722.0,292.8" fill="#f2f2f2" />
<polygon points="740.8,307.0 744.0,305.2 747.2,307.0 744.0,308.8" fill="#f2f2f2" />
<polygon points="751.8,238.0 755.0,236.2 758.2,238.0 755.0,239.8" fill="#f2f2f2" />
<polygon points="759.8,282.0 763.0,280.2 766.2,282.0 763.0,283.8" fill="#f2f2f2" />
<polygon points="784.8,289.0 788.0,287.2 791.2,289.0 788.0,290.8" fill="#f2f2f2" />
<polygon points="813.8,280.5 817.0,278.7 820.2,280.5 817.0,282.3" fill="#f2f2f2" />
<polygon points="828.8,289.0 832.0,287.2 835.2,289.0 832.0,290.8" fill="#f2f2f2" />
<polygon points="854.8,276.0 858.0,274.2 861.2,276.0 858.0,277.8" fill="#f2f2f2" />
<polygon points="883.8,293.5 887.0,291.7 890.2,293.5 887.0,295.3" fill="#f2f2f2" />
<polygon points="912.8,310.5 916.0,308.7 919.2,310.5 916.0,312.3" fill="#f2f2f2" />
<polygon points="938.8,330.0 942.0,328.2 945.2,330.0 942.0,331.8" fill="#f2f2f2" />
<polygon points="956.8,342.0 960.0,340.2 963.2,342.0 960.0,343.8" fill="#f2f2f2" />
<polygon points="798.8,310.0 802.0,308.2 805.2,310.0 802.0,311.8" fill="#f2f2f2" />
<polygon points="827.8,327.0 831.0,325.2 834.2,327.0 831.0,328.8" fill="#f2f2f2" />
<polygon points="846.8,339.0 850.0,337.2 853.2,339.0 850.0,340.8" fill="#f2f2f2" />
<polygon points="862.8,348.0 866.0,346.2 869.2,348.0 866.0,349.8" fill="#f2f2f2" />
<polygon points="903.8,351.0 907.0,349.2 910.2,351.0 907.0,352.8" fill="#f2f2f2" />
<polygon points="943.8,360.0 947.0,358.2 950.2,360.0 947.0,361.8" fill="#f2f2f2" />
<polygon points="869.8,390.0 873.0,388.2 876.2,390.0 873.0,391.8" fill="#f2f2f2" />
<polygon points="894.8,404.0 898.0,402.2 901.2,404.0 898.0,405.8" fill="#f2f2f2" />
<polygon points="758.8,311.0 762.0,309.2 765.2,311.0 762.0,312.8" fill="#f2f2f2" />
<polygon points="783.8,326.0 787.0,324.2 790.2,326.0 787.0,327.8" fill="#f2f2f2" />
<polygon points="810.8,338.0 814.0,336.2 817.2,338.0 814.0,339.8" fill="#f2f2f2" />
<polygon points="831.8,350.0 835.0,348.2 838.2,350.0 835.0,351.8" fill="#f2f2f2" />
<polygon points="656.8,331.0 660.0,329.2 663.2,331.0 660.0,332.8" fill="#f2f2f2" />
<polygon points="636.8,342.0 640.0,340.2 643.2,342.0 640.0,343.8" fill="#f2f2f2" />
<polygon points="809.0,277.0 815.0,274.0 821.0,277.0 821.0,286.0 815.0,289.5 809.0,286.0" fill="#3c3c3c" />
<polygon points="809.0,271.0 815.0,268.0 821.0,271.0 815.0,274.5" fill="#d8d8d8" />
<ellipse cx="601.2" cy="331" rx="2.6" ry="3.2" fill="#2b7d36"/>
<ellipse cx="611.3" cy="326" rx="2.6" ry="3.2" fill="#2b7d36"/>
<ellipse cx="622.9" cy="320" rx="2.6" ry="3.2" fill="#2b7d36"/>
<ellipse cx="589.6" cy="337" rx="2.6" ry="3.2" fill="#2b7d36"/>
<ellipse cx="678" cy="290" rx="2.6" ry="3.2" fill="#2b7d36"/>
<ellipse cx="695" cy="285" rx="2.6" ry="3.2" fill="#2b7d36"/>
<ellipse cx="757" cy="321.5" rx="2.6" ry="3.2" fill="#2b7d36"/>
<ellipse cx="766.5" cy="327" rx="2.6" ry="3.2" fill="#2b7d36"/>
<ellipse cx="805.5" cy="350.5" rx="2.6" ry="3.2" fill="#2b7d36"/>
<ellipse cx="816.5" cy="357" rx="2.6" ry="3.2" fill="#2b7d36"/>
<ellipse cx="834" cy="366" rx="2.6" ry="3.2" fill="#2b7d36"/>
<ellipse cx="925" cy="398" rx="2.6" ry="3.2" fill="#2b7d36"/>
<ellipse cx="937" cy="396" rx="2.6" ry="3.2" fill="#2b7d36"/>
<ellipse cx="923" cy="410" rx="2.6" ry="3.2" fill="#2b7d36"/>
<ellipse cx="932" cy="414" rx="2.6" ry="3.2" fill="#2b7d36"/>
<polygon points="595.1,335.0 598.3,333.1 601.5,335.0 598.3,336.9" fill="#e9ece9" />
<polygon points="596.1,335.0 598.3,333.7 600.5,335.0 598.3,336.3" fill="#b9bdb9" />
<polygon points="608.8,319.1 612.0,317.2 615.2,319.1 612.0,321.0" fill="#e9ece9" />
<polygon points="609.8,319.1 612.0,317.8 614.2,319.1 612.0,320.4" fill="#b9bdb9" />
<polygon points="612.8,324.5 616.0,322.6 619.2,324.5 616.0,326.4" fill="#e9ece9" />
<polygon points="613.8,324.5 616.0,323.2 618.2,324.5 616.0,325.8" fill="#b9bdb9" />
<polygon points="626.6,304.7 630.0,302.7 633.4,304.7 630.0,306.7" fill="#e6e6e6" />
<polygon points="627.8,304.7 630.0,303.4 632.2,304.7 630.0,306.0" fill="#bdbdbd" />
<polygon points="591.3,324.2 594.7,322.2 598.1,324.2 594.7,326.2" fill="#e6e6e6" />
<polygon points="592.5,324.2 594.7,322.9 596.9,324.2 594.7,325.5" fill="#bdbdbd" />
<polygon points="628.0,318.0 636.0,313.5 642.0,317.0 634.0,321.5" fill="#7b7b88" />
<line x1="637.0" y1="331.7" x2="643.0" y2="328.3" stroke="#b9b6a8" stroke-width="1.2" />
<line x1="669.0" y1="314.7" x2="675.0" y2="311.3" stroke="#b9b6a8" stroke-width="1.2" />
<line x1="703.0" y1="295.2" x2="709.0" y2="291.8" stroke="#b9b6a8" stroke-width="1.2" />
<line x1="713.0" y1="319.7" x2="719.0" y2="316.3" stroke="#b9b6a8" stroke-width="1.2" />
<polygon points="679.0,297.0 690.0,291.0 693.0,293.0 682.0,299.0" fill="#b48a5e" /></svg><!--/BLD-->
<svg class="abs" style="left:1211.5px;top:120.5px" width="17.5" height="17.5" viewBox="0 0 24 24" ><path fill="#ababab" d="M12 5.690l5 4.500V18h-2v-6H9v6H7v-7.810l5-4.500M12 3L2 12h3v8h6v-6h2v6h6v-8h3L12 3z"/></svg>
<svg class="abs" style="left:1240px;top:150px" width="80" height="90" viewBox="1240 150 80 90">
<defs><linearGradient id="vcf" x1="0" y1="0" x2="0" y2="1"><stop offset="0" stop-color="#e8e8e8"/><stop offset="0.8" stop-color="#f0f0f0"/><stop offset="1" stop-color="#e6e6e6"/></linearGradient><filter id="vcb"><feGaussianBlur stdDeviation="1.200"/></filter></defs>
<polygon points="1254,213 1281.200,229.500 1308.500,213 1308.500,207 1281.200,223 1254,207" fill="#b9b9b9" filter="url(#vcb)"/>
<polygon points="1281.200,159.700 1309.100,175.900 1281.200,191.100 1253.300,175.900" fill="#f1f1f1"/>
<polygon points="1253.300,175.900 1281.200,191.100 1281.200,226.500 1253.300,210.300" fill="url(#vcf)"/>
<polygon points="1309.100,175.900 1281.200,191.100 1281.200,226.500 1309.100,210.300" fill="url(#vcf)"/>
<g fill="none" stroke="#bdbdbd" stroke-width="1.100" stroke-dasharray="4.600 3"><polygon points="1281.200,159.700 1309.100,175.900 1281.200,191.100 1253.300,175.900"/><path d="M1281.200 191.100V226.500M1253.300 175.900V210.300M1309.100 175.900V210.300"/></g>
<g font-family="Liberation Sans, sans-serif" font-weight="bold" fill="#bbbbc4" text-anchor="middle">
<text transform="matrix(0.800,0.460,-0.860,0.500,1279.800,177.200)" font-size="8">TOP</text>
<text transform="matrix(0.760,0.440,0,1,1267.300,204.600)" font-size="8.600">FRONT</text>
<text transform="matrix(0.760,-0.440,0,1,1295.300,203.400)" font-size="8.600">RIGHT</text></g>
</svg>
<div id="handle"></div><svg class="abs" style="left:1313px;top:375px" width="8" height="12" viewBox="0 0 8 12"><path d="M5.800 2.200L2 6L5.800 9.800" fill="none" stroke="#fff" stroke-width="1.400"/></svg>
<svg class="abs" style="left:884px;top:599px" width="14" height="18" viewBox="0 0 14 18"><path d="M2 2.200V13.400L4.800 10.900L6.900 15.400L8.900 14.500L6.900 10.200H10.300z" fill="#fff" stroke="#3a3a3a" stroke-width="1.100" stroke-linejoin="round"/></svg>
<div class="tbar" style="left:585.800px;width:172.700px"></div><div class="tbar" style="left:765.800px;width:69px"></div><div class="tbar" style="left:841.800px;width:103.600px"></div>
<!--TOOLS--><div class="abs" style="left:589px;top:651.2px;width:27.3px;height:27.8px;background:#2a2a2a;border-top:1.6px solid #161616;border-left:1px solid #262626;border-right:1px solid #3a3a3a;border-radius:1.5px"></div>
<svg class="abs" style="left:580px;top:645px" width="375" height="42" viewBox="580 645 375 42">
<g fill="none" stroke="#2aa4de" stroke-width="1.7" stroke-linecap="round" stroke-linejoin="round"><path d="M602.7 657.6V663.2M602.7 668.6V673.6"/><path d="M599.3 670.1C595.6 669.4 594.4 667.6 594.4 665.9C594.4 663.2 598 661.5 602.7 661.5C607.4 661.5 611 663.2 611 665.9C611 668.4 607.6 670.2 603.6 670.3"/><path d="M601.6 667.6L598.9 670.2L601.6 672.7"/></g>
<polygon points="612.8,654.1 615.4,659.1 610.2,659.1" fill="#2aa4de"/>
<path fill="#f4f4f4" d="M632.9 664.6V659.6a1 1 0 0 1 2 0V664h.5V658.3a1 1 0 0 1 2 0V664h.5V658.6a1 1 0 0 1 2 0V664.3h.5V660.2a1 1 0 0 1 2 0V667.4c0 3.9-2.2 6.4-5.600 6.400c-2.400 0-3.800-1-5-3l-2.500-4.100c-.5-.9.600-1.700 1.400-1l1.700 1.600z"/>
<g fill="none" stroke="#f4f4f4" stroke-width="1.8" stroke-linecap="round" stroke-linejoin="round"><path d="M672.1 659.3V671.6M668.3 661.3C669.800 661 671.300 660.200 672.100 658.500C672.900 660.200 674.400 661 675.900 661.300M667.600 668.200L672.100 672.600L676.600 668.200"/></g>
<g fill="#f4f4f4"><circle cx="706.4" cy="659.2" r="1.75"/><path d="M703.6 661.6h5.600c.9 0 1.500.7 1.700 1.500l1 4.600h-1.300l-.9-3.400h-.5V674h-2.100v-5.400h-1.400V674h-2.100v-9.700h-.5l-.9 3.400h-1.300l1-4.600c.2-.8.800-1.500 1.700-1.500z"/></g>
<g fill="#f4f4f4"><circle cx="741.2" cy="669.9" r="2"/><path d="M741.2 667.3L734 662.300C736 660.100 738.500 659.100 741.200 659.100C743.900 659.100 746.400 660.100 748.400 662.300z"/><polygon points="751.4,654.1 754.200,659.1 748.600,659.1"/></g>
<g fill="none" stroke="#f4f4f4" stroke-width="1.3" stroke-linejoin="round"><path d="M775.600 662.200L783.300 659.300L789.700 661.300L789.700 663.300L785 664.800M775.600 662.200V670.300L781.600 673V664.300L775.600 662.200M781.600 664.300L789.700 661.300M781.600 673L789.700 669.600V667.600L785.300 669.200"/><path d="M777.400 664.800V669.400L780 670.500V665.800z" fill="#f4f4f4" stroke="none"/></g>
<path fill="#f4f4f4" d="M783 663.900L788.600 662v1.300l-3.900 1.400v3.300l3.900-1.400v1.400L783 670z" opacity=".9"/>
<polygon points="793.1,654.1 795.9,659.3 790.300,659.3" fill="#f4f4f4"/>
<g transform="translate(818.4,665.6) rotate(-40.5)"><rect x="-10.6" y="-2.700" width="21.2" height="5.400" fill="#f4f4f4"/><g stroke="#555" stroke-width=".7"><path d="M-8 -2.700v2.200M-5.300 -2.700v1.500M-2.600 -2.700v2.200M0 -2.700v1.500M2.600 -2.700v2.200M5.300 -2.700v1.500M8 -2.700v2.200"/></g></g>
<g fill="#f4f4f4"><rect x="855.4" y="657.400" width="6.400" height="6" rx=".4"/><rect x="850" y="668.200" width="5.800" height="5.600" rx=".4"/><rect x="861.400" y="668.200" width="5.800" height="5.600" rx=".4"/></g><path d="M858.600 663.400V665.800M852.900 668.200V665.800H864.300V668.200" fill="none" stroke="#f4f4f4" stroke-width="1.100"/>
<path d="M900.26 664.47L900.26 667.33L898.26 667.47L897.89 668.37L899.20 669.88L897.18 671.90L895.67 670.59L894.77 670.96L894.63 672.96L891.77 672.96L891.63 670.96L890.73 670.59L889.22 671.90L887.20 669.88L888.51 668.37L888.14 667.47L886.14 667.33L886.14 664.47L888.14 664.33L888.51 663.43L887.20 661.92L889.22 659.90L890.73 661.21L891.63 660.84L891.77 658.84L894.63 658.84L894.77 660.84L895.67 661.21L897.18 659.90L899.20 661.92L897.89 663.43L898.26 664.33ZM896.30 665.90A3.1 3.1 0 1 0 890.10 665.90A3.1 3.1 0 1 0 896.30 665.90Z" fill="#f4f4f4" fill-rule="evenodd"/>
<path fill="#f4f4f4" fill-rule="evenodd" d="M921.300 662.300h3l1.300-2.100h5.400l1.300 2.100h3c.8 0 1.500.7 1.500 1.500v7.800c0 .8-.7 1.500-1.500 1.500h-14c-.8 0-1.500-.7-1.500-1.500v-7.800c0-.8.700-1.500 1.500-1.500zM928.300 663.600a4.100 4.100 0 1 0 0 8.200a4.100 4.100 0 1 0 0-8.200zM928.300 665.300a2.400 2.400 0 1 1 0 4.800a2.400 2.400 0 1 1 0-4.800z"/>
</svg><!--/TOOLS-->
</body>
</html>
